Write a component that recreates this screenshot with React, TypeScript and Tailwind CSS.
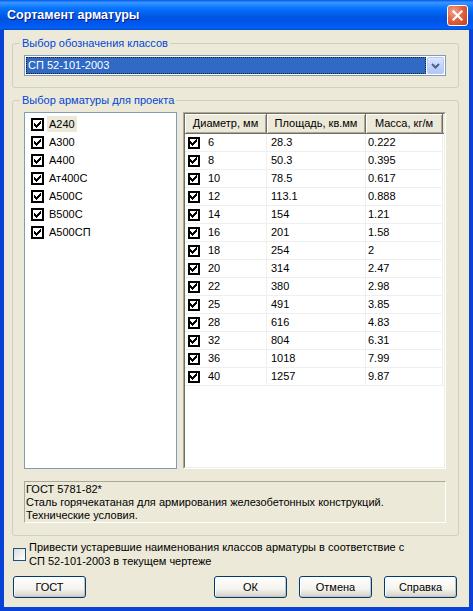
import React from "react";

const classes = ["А240", "А300", "А400", "Ат400С", "А500С", "В500С", "А500СП"];

const rows: [string, string, string][] = [
  ["6", "28.3", "0.222"],
  ["8", "50.3", "0.395"],
  ["10", "78.5", "0.617"],
  ["12", "113.1", "0.888"],
  ["14", "154", "1.21"],
  ["16", "201", "1.58"],
  ["18", "254", "2"],
  ["20", "314", "2.47"],
  ["22", "380", "2.98"],
  ["25", "491", "3.85"],
  ["28", "616", "4.83"],
  ["32", "804", "6.31"],
  ["36", "1018", "7.99"],
  ["40", "1257", "9.87"],
];

const offs = [2, 3, 4, 3, 2, 1, 0];

const FlatCheck: React.FC<{ size?: number }> = ({ size = 13 }) => {
  const o = Math.floor((size - 7) / 2);
  return (
    <svg width={size} height={size} viewBox={`0 0 ${size} ${size}`} shapeRendering="crispEdges" className="shrink-0">
      <rect x="0" y="0" width={size} height={size} fill="#000" />
      <rect x="2" y="2" width={size - 4} height={size - 4} fill="#fff" />
      {offs.map((y, i) => (
        <rect key={i} x={o + i} y={o + y} width="1" height="3" fill="#000" />
      ))}
    </svg>
  );
};

const XpButton: React.FC<{ label: string }> = ({ label }) => (
  <button className="w-[73px] h-[22px] rounded-[3px] border border-[#003C74] bg-[linear-gradient(to_bottom,#FFFFFF_0%,#F4F3EE_60%,#D6D0C5_100%)] text-[11px] leading-none text-black shadow-[inset_-1px_-1px_0_#C9C4B8,inset_1px_1px_0_#FFFFFF]">
    {label}
  </button>
);

export default function App() {
  return (
    <div className="w-[473px] h-[611px] flex flex-col bg-[#0842D6] font-['Liberation_Sans',Arial,sans-serif] text-[11px] text-black select-none">
      {/* title bar */}
      <div className="h-[30px] flex items-center justify-between pl-[7px] pr-[5px] bg-[linear-gradient(to_bottom,#0058EE_0%,#3A93FF_8%,#288EFF_14%,#127DFF_22%,#036FFC_32%,#0262EE_44%,#0057E5_56%,#0054E3_66%,#0055EB_76%,#005BF5_86%,#0262EE_94%,#0049D0_100%)]">
        <span className="text-white font-bold text-[12.5px] [text-shadow:1px_1px_0_#0A1883]">Сортамент арматуры</span>
        <div className="w-[21px] h-[21px] rounded-[3px] border border-white bg-[radial-gradient(circle_at_30%_30%,#F3A58E_0%,#E5633E_45%,#C63C18_100%)] flex items-center justify-center">
          <svg width="11" height="11" viewBox="0 0 11 11">
            <path d="M1.5 1.5 L9.5 9.5 M9.5 1.5 L1.5 9.5" stroke="#fff" strokeWidth="2.2" strokeLinecap="square" />
          </svg>
        </div>
      </div>

      {/* client area */}
      <div className="flex-1 mx-[4px] mb-[4px] bg-[#ECE9D8] flex flex-col">
        <fieldset className="mt-[7px] ml-[8px] w-[447px] border border-[#D0D0BF] rounded-[3px] pl-[11px] pr-[12px] pt-[5px] pb-[11px]">
          <legend className="-ml-[4px] px-[2px] leading-[13px] text-[#0046D5]">Выбор обозначения классов</legend>
          <div className="h-[21px] border border-[#7F9DB9] bg-white p-[1px] flex gap-[1px]">
            <div className="flex-1 bg-[#316AC5] border border-dotted border-[#1F1F1F] text-white pl-[1px] flex items-center leading-none">
              СП 52-101-2003
            </div>
            <div className="w-[17px] rounded-[2px] border border-[#BAC9F0] bg-[linear-gradient(to_bottom,#DCE7FE_0%,#C3D4FC_50%,#B3C7F6_100%)] flex items-center justify-center">
              <svg width="9" height="6" viewBox="0 0 9 6">
                <path d="M1 1 L4.5 4.5 L8 1" fill="none" stroke="#4D6185" strokeWidth="2" />
              </svg>
            </div>
          </div>
        </fieldset>

        <fieldset className="mt-[6px] ml-[8px] w-[447px] border border-[#D0D0BF] rounded-[3px] pl-[11px] pr-[12px] pt-[5px] pb-[12px]">
          <legend className="-ml-[4px] px-[2px] leading-[13px] text-[#0046D5]">Выбор арматуры для проекта</legend>
          <div className="flex gap-[6px] h-[357px]">
            {/* class list */}
            <div className="w-[153px] border border-[#7F9DB9] bg-white pt-[2px] pl-[6px]">
              {classes.map((c, i) => (
                <div key={c} className="h-[18px] flex items-center gap-[3px]">
                  <FlatCheck />
                  <span className={`h-[16px] leading-[16px] px-[2px] ${i === 0 ? "bg-[#ECE9D8]" : ""}`}>{c}</span>
                </div>
              ))}
            </div>

            {/* list view */}
            <div className="w-[263px] border border-t-[#ACA899] border-l-[#ACA899] border-b-white border-r-white">
              <div className="h-full border border-t-[#716F64] border-l-[#716F64] border-b-[#F1EFE2] border-r-[#F1EFE2] bg-white flex flex-col">
                <div className="h-[20px] flex bg-[#ECE9D8] shrink-0">
                  {[
                    ["Диаметр, мм", "w-[82px]"],
                    ["Площадь, кв.мм", "w-[99px]"],
                    ["Масса, кг/м", "w-[77px]"],
                  ].map(([t, w]) => (
                    <div
                      key={t}
                      className={`${w} flex items-center justify-center border-r border-b border-r-[#716F64] border-b-[#716F64] shadow-[inset_1px_1px_0_#FFFFFF,inset_-1px_-1px_0_#ACA899]`}
                    >
                      {t}
                    </div>
                  ))}
                  <div className="flex-1 border-b border-b-[#716F64]" />
                </div>
                {rows.map(([d, a, m]) => (
                  <div key={d} className="h-[18px] flex">
                    <div className="w-[82px] flex items-center pl-[3px] gap-[8px] border-r border-b border-[#EFEFEF]">
                      <FlatCheck size={12} />
                      <span>{d}</span>
                    </div>
                    <div className="w-[99px] flex items-center pl-[4px] border-r border-b border-[#EFEFEF]">{a}</div>
                    <div className="w-[77px] flex items-center pl-[2px] border-r border-b border-[#EFEFEF]">{m}</div>
                  </div>
                ))}
              </div>
            </div>
          </div>

          <div className="mt-[12px] h-[42px] border border-t-[#ACA899] border-l-[#ACA899] border-b-white border-r-white pl-[1px] leading-[13px] pt-[1px]">
            <div>ГОСТ 5781-82*</div>
            <div>Сталь горячекатаная для армирования железобетонных конструкций.</div>
            <div>Технические условия.</div>
          </div>
        </fieldset>

        <div className="mt-[4px] ml-[9px] flex items-center gap-[3px]">
          <div className="w-[13px] h-[13px] border border-[#1C5180] bg-[linear-gradient(135deg,#DCDCD7_0%,#F5F5F1_70%,#FFFFFF_100%)] shrink-0" />
          <div className="leading-[14px]">
            <div>Привести устаревшие наименования классов арматуры в соответствие с</div>
            <div>СП 52-101-2003 в текущем чертеже</div>
          </div>
        </div>

        <div className="mt-[8px] ml-[9px] mr-[12px] flex">
          <XpButton label="ГОСТ" />
          <div className="flex-1" />
          <div className="flex gap-[12px]">
            <XpButton label="ОК" />
            <XpButton label="Отмена" />
            <XpButton label="Справка" />
          </div>
        </div>
      </div>
    </div>
  );
}
